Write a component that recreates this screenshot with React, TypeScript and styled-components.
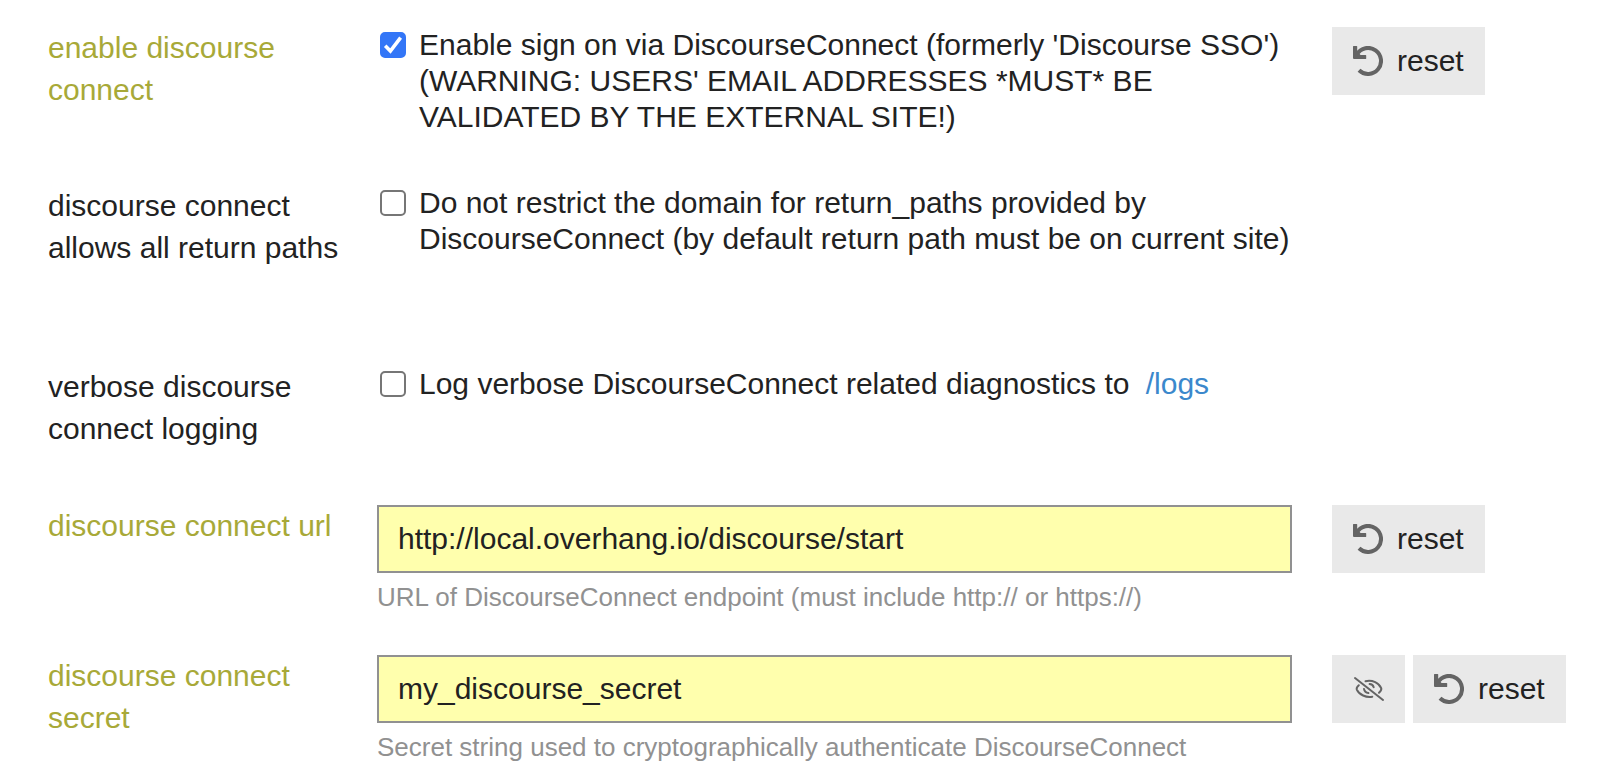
import React from "react";
import styled, { createGlobalStyle } from "styled-components";

const GlobalStyle = createGlobalStyle`
  * { box-sizing: border-box; }
  body {
    margin: 0;
    background: #fff;
    color: #222;
    font-family: "Liberation Sans", Arial, sans-serif;
    font-size: 30px;
  }
`;

const Settings = styled.form`
  padding: 27px 36px 0 48px;
`;

const Row = styled.div`
  display: grid;
  grid-template-columns: 329px minmax(0, 1fr) 274px;
  padding-bottom: 40px;

  &:last-child {
    padding-bottom: 0;
  }
`;

const Name = styled.label<{ $overridden?: boolean }>`
  margin-bottom: 15px;
  padding-right: 24px;
  line-height: 42px;
  color: ${(p) => (p.$overridden ? "#a8a938" : "#222")};
`;

const Value = styled.div<{ $tall?: boolean }>`
  min-height: ${(p) => (p.$tall ? "141px" : "0")};
`;

const Option = styled.div`
  display: flex;
  align-items: flex-start;
  gap: 13px;
  margin-bottom: 10px;
  padding-left: 3px;
`;

const CheckboxBox = styled.span`
  position: relative;
  flex: none;
  width: 26px;
  height: 26px;
  margin: 5px 0;
`;

const CheckboxInput = styled.input`
  display: block;
  appearance: none;
  width: 26px;
  height: 26px;
  margin: 0;
  border: 2px solid #767676;
  border-radius: 5px;
  background: #fff;

  &:checked {
    border-color: #3376f7;
    background: #3376f7;
  }

  &:checked + svg {
    display: block;
  }
`;

const Tick = styled.svg`
  display: none;
  position: absolute;
  inset: 0;
  pointer-events: none;
`;

const Description = styled.label`
  line-height: 36px;
`;

const Link = styled.a`
  margin-left: 8px;
  color: #3b88cc;
  text-decoration: none;
`;

const TextField = styled.input`
  display: block;
  width: 100%;
  height: 68px;
  padding: 0 19px;
  border: 2px solid #919191;
  border-radius: 0;
  background: #ffffad;
  color: #222;
  font: inherit;
`;

const Hint = styled.div`
  margin-top: 6px;
  font-size: 26px;
  line-height: 36px;
  color: #919191;
`;

const Actions = styled.div`
  display: flex;
  align-items: flex-start;
  gap: 8px;
  padding-left: 40px;
`;

const Button = styled.button`
  display: flex;
  align-items: center;
  justify-content: center;
  gap: 14px;
  min-width: 73px;
  height: 68px;
  padding: 0 21px;
  border: 0;
  background: #e9e9e9;
  color: #222;
  font: inherit;
`;

const Icon = styled.svg`
  flex: none;
  width: 30px;
  height: 30px;
  color: #646464;
`;

const Checkbox = ({ id, checked }: { id: string; checked?: boolean }) => (
  <CheckboxBox>
    <CheckboxInput type="checkbox" id={id} defaultChecked={checked} />
    <Tick viewBox="0 0 26 26" width="26" height="26" aria-hidden="true">
      <path d="M5.2 13.8 10.4 19 20.6 5.6" fill="none" stroke="#fff" strokeWidth="3.6" />
    </Tick>
  </CheckboxBox>
);

const ResetButton = () => (
  <Button type="button">
    <Icon viewBox="0 0 30 30" aria-hidden="true">
      <path d="M6 24.3A13 13 0 1 0 3.9 8.2" fill="none" stroke="currentColor" strokeWidth="4" />
      <path d="M0 .6Q0 0 .6 0H3.6Q4.2 0 4.2 .6V5.4L7.6 9H12.6Q13.2 9 13.2 9.6V12.5Q13.2 13.1 12.6 13.1H1Q0 13.1 0 12.1Z" fill="currentColor" />
    </Icon>
    reset
  </Button>
);

const HideButton = () => (
  <Button type="button" aria-label="hide secret">
    <Icon viewBox="0 0 30 30" aria-hidden="true">
      <g fill="none" stroke="currentColor" strokeWidth="2" strokeLinecap="round">
        <path d="M1 4 29 26" />
        <path d="M11.5 7.2C18.5 5.6 25 9 27.2 14.2C27.7 15.6 26.6 17.4 25 18.8" />
        <path d="M4.8 11.2C3.2 12.7 2.3 14.3 2.8 15.6C5.2 20.8 12 23.8 18.3 22.7" />
        <path d="M15.6 10.1C17.6 10.2 19.2 11.4 19.7 13.2" />
        <path d="M10 14.9C10.4 17.3 12 18.8 14.4 19.1" />
      </g>
    </Icon>
  </Button>
);

export default function App() {
  return (
    <>
      <GlobalStyle />
      <Settings>
        <Row>
          <Name htmlFor="enable" $overridden>enable discourse connect</Name>
          <Value>
            <Option>
              <Checkbox id="enable" checked />
              <Description htmlFor="enable">
                Enable sign on via DiscourseConnect (formerly 'Discourse SSO') (WARNING: USERS' EMAIL
                ADDRESSES *MUST* BE VALIDATED BY THE EXTERNAL SITE!)
              </Description>
            </Option>
          </Value>
          <Actions><ResetButton /></Actions>
        </Row>
        <Row>
          <Name htmlFor="return-paths">discourse connect allows all return paths</Name>
          <Value $tall>
            <Option>
              <Checkbox id="return-paths" />
              <Description htmlFor="return-paths">
                Do not restrict the domain for return_paths provided by DiscourseConnect (by default
                return path must be on current site)
              </Description>
            </Option>
          </Value>
        </Row>
        <Row>
          <Name htmlFor="verbose">verbose discourse connect logging</Name>
          <Value>
            <Option>
              <Checkbox id="verbose" />
              <Description htmlFor="verbose">
                Log verbose DiscourseConnect related diagnostics to <Link href="/logs">/logs</Link>
              </Description>
            </Option>
          </Value>
        </Row>
        <Row>
          <Name htmlFor="url" $overridden>discourse connect url</Name>
          <Value>
            <TextField id="url" type="text" defaultValue="http://local.overhang.io/discourse/start" />
            <Hint>URL of DiscourseConnect endpoint (must include http:// or https://)</Hint>
          </Value>
          <Actions><ResetButton /></Actions>
        </Row>
        <Row>
          <Name htmlFor="secret" $overridden>discourse connect secret</Name>
          <Value>
            <TextField id="secret" type="text" defaultValue="my_discourse_secret" />
            <Hint>Secret string used to cryptographically authenticate DiscourseConnect</Hint>
          </Value>
          <Actions>
            <HideButton />
            <ResetButton />
          </Actions>
        </Row>
      </Settings>
    </>
  );
}
